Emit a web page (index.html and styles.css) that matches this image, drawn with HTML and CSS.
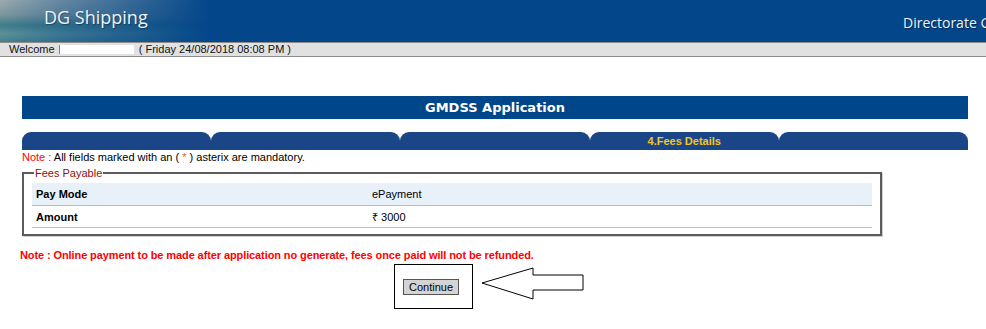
FILE: index.html
```html
<html>
  <head>
    <title>GMDSS Application</title>
    <link rel="stylesheet" href="styles.css">
  </head>

  <body>
    <div class="header">
      <div class="logo">DG Shipping</div>
      <div class="dept">Directorate G</div>
    </div>
    <div class="infobar">
      Welcome <span class="user"></span> ( Friday 24/08/2018 08:08 PM )
    </div>

    <div class="main">
      <div class="title">GMDSS Application</div>

      <!-- wizard steps -->
      <ul class="tabs">
        <li></li>
        <li></li>
        <li></li>
        <li class="active">4.Fees Details</li>
        <li></li>
      </ul>

      <p class="hint"><span class="red">Note :</span> All fields marked with an ( <span class="star">*</span> ) asterix are mandatory.</p>

      <fieldset class="fees">
        <legend>Fees Payable</legend>
        <table class="grid">
          <tr class="head">
            <td class="lbl">Pay Mode</td>
            <td>ePayment</td>
          </tr>
          <tr>
            <td class="lbl">Amount</td>
            <td>&#8377; 3000</td>
          </tr>
        </table>
      </fieldset>

      <p class="warn">Note : Online payment to be made after application no generate, fees once paid will not be refunded.</p>

      <div class="actions">
        <div class="btnbox">
          <input type="button" class="btn" value="Continue" />
        </div>
        <svg class="arrow" width="104" height="34" viewBox="0 0 104 34">
          <polygon points="1,16 52,1 52,8 102,8 102,23 52,23 52,32" fill="#fff" stroke="#000" stroke-width="1"/>
        </svg>
      </div>
    </div>
  </body>
</html>
```

FILE: styles.css
```css
body {
  margin: 0;
  font-family: "Liberation Sans", Arial, sans-serif;
  font-size: 11px;
  color: #000;
  background: #fff;
}

.header {
  height: 42px;
  display: flex;
  background:
    linear-gradient(to right, rgba(3,70,138,0) 0, rgba(3,70,138,0.35) 60px, #03468a 210px),
    linear-gradient(to bottom, #9aabb0 0, #7d989e 35%, #3f7e8a 60%, #5b9198 80%, #47818c 100%);
  overflow: hidden;
}
.logo {
  flex: none;
  width: 903px;
  box-sizing: border-box;
  font-family: "Open Sans", sans-serif;
  font-size: 18px;
  color: #eef3f8;
  padding: 5px 0 0 44px;
  text-shadow: 1px 1px 1px rgba(0,0,0,0.35);
}
.dept {
  flex: none;
  font-family: "Open Sans", sans-serif;
  font-size: 14px;
  color: #eef3f8;
  padding-top: 13px;
  white-space: nowrap;
  text-shadow: 1px 1px 1px rgba(0,0,0,0.4);
}

.infobar {
  height: 13px;
  line-height: 13px;
  background: #e1e1e1;
  border-top: 1px solid #8c8c8c;
  border-bottom: 1px solid #8c8c8c;
  padding-left: 9px;
  font-size: 11px;
  color: #111;
}
.user {
  display: inline-block;
  width: 74px;
  height: 9px;
  margin: 0 2px 0 1px;
  background: #fff;
  border-left: 1px solid #e06020;
  vertical-align: -1px;
}

.main {
  width: 946px;
  margin: 39px 0 0 22px;
}

.title {
  height: 23px;
  line-height: 23px;
  background: #00468a;
  color: #fff;
  text-align: center;
  font-family: "DejaVu Sans", Verdana, sans-serif;
  font-size: 13px;
  font-weight: bold;
}

.tabs {
  display: flex;
  list-style: none;
  margin: 13px 0 0 0;
  padding: 0;
}
.tabs li {
  flex: 1;
  height: 18px;
  line-height: 19px;
  background: #1a4687;
  border-radius: 9px 9px 0 0;
  text-align: center;
  font-weight: bold;
  color: #f8c51c;
}

.hint {
  margin: 1px 0 0 0;
  line-height: 13px;
}
.red {
  color: #f00;
}
.star {
  color: #e8601c;
}

.fees {
  width: 840px;
  margin: 3px 0 0 0;
  padding: 4px 8px 6px 8px;
  border: 2px solid #5c5c5c;
  box-shadow: 1px 1px 0 #cfcfcf;
}
.fees legend {
  color: #8e1010;
  padding: 0 1px;
  margin-left: 2px;
  line-height: 12px;
}

.grid {
  width: 100%;
  border-collapse: collapse;
}
.grid td {
  height: 22px;
  padding: 1px 4px 0 4px;
  border-bottom: 1px solid #c2c2c2;
  font-size: 11px;
}
.grid .lbl {
  width: 328px;
  font-weight: bold;
}
.grid .head td {
  background: #e8f0f9;
  border-bottom-color: #b4bcc6;
}

.warn {
  margin: 13px 0 0 -2px;
  line-height: 13px;
  color: #f00;
  font-weight: bold;
  letter-spacing: -0.1px;
}

.actions {
  display: flex;
  align-items: center;
  margin: 2px 0 0 372px;
}
.btnbox {
  width: 64px;
  height: 16px;
  padding: 14px 5px 13px 8px;
  border: 1px solid #000;
}
.btn {
  width: 56px;
  height: 16px;
  padding: 0;
  margin: 0;
  border: 1px solid #555;
  background: #d4d4d4;
  font-family: "Liberation Sans", Arial, sans-serif;
  font-size: 11px;
  color: #000;
}
.arrow {
  display: block;
  margin: -4px 0 0 8px;
}
```
